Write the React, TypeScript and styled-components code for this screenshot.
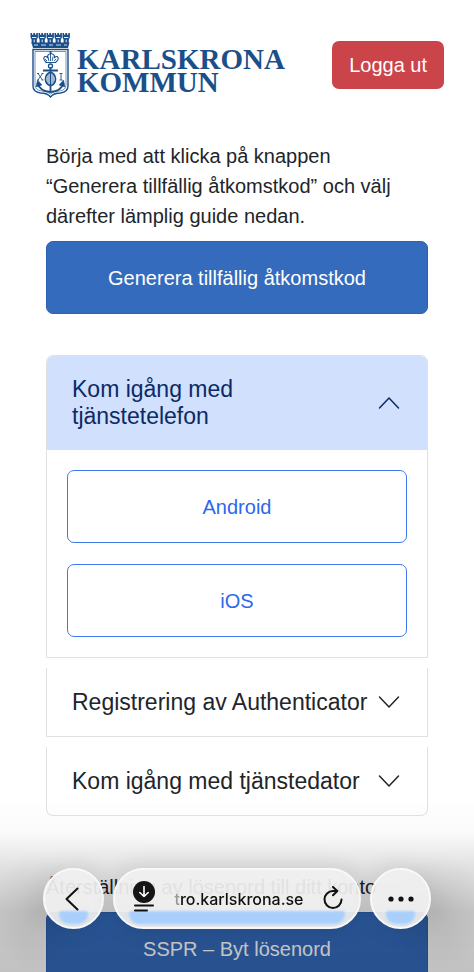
import React, { useState } from "react";
import styled, { createGlobalStyle } from "styled-components";

const GlobalStyle = createGlobalStyle`
  *, *::before, *::after { box-sizing: border-box; }
  body {
    margin: 0;
    background: #fff;
    color: #212529;
    font-family: "Liberation Sans", Arial, sans-serif;
    font-size: 20px;
    line-height: 30px;
  }
  button { font: inherit; cursor: pointer; }
`;

const Screen = styled.div`
  height: 100vh;
  overflow-y: auto;
  scrollbar-width: none;
`;

const Header = styled.header`
  display: flex;
  align-items: center;
  justify-content: space-between;
  padding: 32px 30px 0;
`;

const LogoLink = styled.a`
  display: flex;
  align-items: center;
  gap: 6px;
  color: #1b4f8a;
  text-decoration: none;
`;

const Wordmark = styled.span`
  padding-top: 12px;
  font-family: "Liberation Serif", "Times New Roman", serif;
  font-size: 29px;
  font-weight: 700;
  line-height: 23px;
`;

const LogoutButton = styled.button`
  height: 48px;
  padding: 0 17px;
  border: 0;
  border-radius: 7px;
  background: #cb444a;
  color: #fff;
`;

const Content = styled.main`
  padding: 43px 46px 24px;
`;

const Intro = styled.p`
  margin: 0 0 10px;
  padding-right: 16px;
`;

const WideButton = styled.button<{ $outlined?: boolean }>`
  display: block;
  width: 100%;
  height: 73px;
  border: 1px solid ${(p) => (p.$outlined ? "#3f79ee" : "#2d62b3")};
  border-radius: 7px;
  background: ${(p) => (p.$outlined ? "#fff" : "#346bbc")};
  color: ${(p) => (p.$outlined ? "#2c68ee" : "#fff")};
`;

const Accordion = styled.div`
  display: grid;
  gap: 10px;
  margin: 41px 0 56px;
`;

const AccordionItem = styled.section`
  border: 1px solid #dee2e6;
  border-top: 0;
  overflow: hidden;

  &:first-child { border-top: 1px solid #dee2e6; border-radius: 7px 7px 0 0; }
  &:last-child { border-radius: 0 0 7px 7px; }
`;

const AccordionTitle = styled.h2`
  margin: 0;
  font: inherit;
`;

const AccordionButton = styled.button<{ $open: boolean }>`
  display: flex;
  align-items: center;
  justify-content: space-between;
  width: 100%;
  min-height: 68px;
  padding: 20px 27px 20px 25px;
  border: 0;
  background: ${(p) => (p.$open ? "#d1e0fc" : "transparent")};
  color: ${(p) => (p.$open ? "#0b2a66" : "#212529")};
  font-size: 23px;
  line-height: 27px;
  text-align: left;

  svg { flex: none; }
`;

const TitleText = styled.span<{ $narrow: boolean }>`
  max-width: ${(p) => (p.$narrow ? "240px" : "none")};
  white-space: ${(p) => (p.$narrow ? "normal" : "nowrap")};
`;

const Panel = styled.div`
  display: grid;
  gap: 21px;
  padding: 20px;
`;

const ResetText = styled.p`
  margin: 0 0 10px;
  white-space: nowrap;
`;

const Shade = styled.div`
  position: fixed;
  inset: auto 0 0;
  height: 172px;
  pointer-events: none;
  background:
    radial-gradient(ellipse 46px 60px at 36px 112px, rgba(0, 0, 0, 0.08), transparent),
    radial-gradient(ellipse 46px 60px at calc(100% - 36px) 112px, rgba(0, 0, 0, 0.08), transparent),
    linear-gradient(
      rgba(0, 0, 0, 0) 0,
      rgba(0, 0, 0, 0.02) 34px,
      rgba(0, 0, 0, 0.12) 68px,
      rgba(0, 0, 0, 0.22) 112px,
      rgba(0, 0, 0, 0.24) 172px
    );
`;

const BrowserBar = styled.nav`
  position: fixed;
  inset: auto 43px 43px;
  display: flex;
  gap: 9px;
`;

const Glass = styled.div`
  position: relative;
  isolation: isolate;
  display: flex;
  align-items: center;
  justify-content: center;
  height: 61px;
  border: 2px solid #f8f8f8;
  border-radius: 31px;
  background: rgba(240, 240, 240, 0.93);
  box-shadow: 0 0 24px rgba(0, 0, 0, 0.1);
  color: #111;
  overflow: hidden;

  &::after {
    content: "";
    position: absolute;
    z-index: -1;
    inset: auto 14px 3px;
    height: 13px;
    border-radius: 4px 4px 14px 14px;
    background: #a9d0fd;
    filter: blur(1px);
  }
`;

const RoundGlass = styled(Glass).attrs({ as: "button" })`
  flex: none;
  width: 61px;
  padding: 0;
`;

const AddressGlass = styled(Glass)`
  flex: 1;
  justify-content: space-between;
  padding: 0 16px 0 18px;
`;

const IconButton = styled.button`
  display: flex;
  padding: 0;
  border: 0;
  background: none;
  color: inherit;
`;

const Address = styled.span`
  font-family: Inter, sans-serif;
  font-size: 16px;
  font-weight: 500;
  line-height: 24px;
`;

const Faded = styled.span`
  color: #999;
`;

const turrets = [0, 8, 16, 24, 32];

function Crest() {
  return (
    <svg width="41" height="66" viewBox="0 0 41 66" fill="none" stroke="currentColor" aria-hidden="true">
      {turrets.map((x) => (
        <g key={x} transform={`translate(${x + 0.500} 1)`}>
          <path d="M0 0h1.600v1.800h1.200V0h1.800v1.800h1.200V0h1.600v4.500L6.300 6.500V11H1.100V6.500L0 4.500Z" fill="currentColor" stroke="none" />
          <path d="M1.500 4.500h4.400M3.700 6.500v3" stroke="#fff" strokeWidth=".9" />
        </g>
      ))}
      <path d="M1.500 10.500h38L38 16H3Z" fill="currentColor" stroke="none" />
      <path d="M4 13h4m3 0h5m3 0h4m3 0h5m3 0h3" stroke="#fff" strokeWidth=".8" />
      <path d="M3 17.500h35V54q0 6-7.500 7-7 0-10 4-3-4-10-4Q3 60 3 54Z" strokeWidth="1.400" />
      <path d="M5 19.500h31V53q0 5-6.500 6-6 0-9 3-3-3-9-3Q5 58 5 53Z" strokeWidth=".6" />
      <path d="M16 30.500q-3.500-3-2.500-5t3.500 0q-.5-3 3.500-4 4 1 3.500 4 2.500-2 3.500 0t-2.500 5Z" transform="translate(.5 0)" strokeWidth="1.100" />
      <path d="M15.500 30.500h10M18 24.500l.8 4.500m4.200-4.500-.8 4.500M20.500 19v10M19 20h3M15 27l2 2m9-2-2 2" strokeWidth=".9" />
      <circle cx="20.500" cy="34" r="2" strokeWidth="1.300" />
      <path d="M20.500 36v24M13 38.500h15" strokeWidth="1.800" />
      <ellipse cx="20.500" cy="47" rx="5" ry="6.500" strokeWidth="1.700" />
      <path d="M18 42v10m5-10v10" strokeWidth=".8" />
      <path d="M7.500 51q2 8 13 9 11-1 13-9" strokeWidth="1.800" />
      <path d="m6 55 1.500-7 4.500 5Zm29 0-1.500-7-4.500 5Z" fill="currentColor" strokeWidth=".5" />
      <path d="m8 41.500 4.500 6.500m0-6.500L8 48M7 41.500h2m2.500 0h2M7 48h2m2.500 0h2M31 41.500V48m-1.500-6.500h3m-3 6.500h3" strokeWidth=".9" />
    </svg>
  );
}

function Chevron({ up }: { up: boolean }) {
  return (
    <svg width="22" height="22" viewBox="0 0 22 22" fill="none" stroke="currentColor" strokeWidth="1.500" strokeLinecap="round" strokeLinejoin="round" aria-hidden="true">
      <path d={up ? "m1.500 16 9.500-10 9.500 10" : "m1.500 6 9.500 10L20.500 6"} />
    </svg>
  );
}

function DownloadIcon() {
  return (
    <svg width="22" height="36" viewBox="0 0 22 36" fill="none" aria-hidden="true">
      <circle cx="11" cy="11" r="11" fill="#151515" />
      <path d="M11 5.500v10M6.800 11.500l4.200 4 4.200-4" stroke="#fff" strokeWidth="1.600" strokeLinecap="round" strokeLinejoin="round" />
      <path d="M2 24.500h18M2 29.500h12" stroke="#111" strokeWidth="2" strokeLinecap="round" />
    </svg>
  );
}

function ReloadIcon() {
  return (
    <svg width="20" height="26" viewBox="0 0 20 26" fill="none" stroke="#111" strokeWidth="2" strokeLinecap="round" strokeLinejoin="round" aria-hidden="true">
      <path d="M18.500 13.500A8.500 8.500 0 1 1 10 5h4" />
      <path d="m10 1 4.300 4-4.300 4.300" />
    </svg>
  );
}

const sections = [
  { title: "Kom igång med tjänstetelefon", guides: ["Android", "iOS"] },
  { title: "Registrering av Authenticator", guides: [] },
  { title: "Kom igång med tjänstedator", guides: [] },
];

export default function App() {
  const [openIndex, setOpenIndex] = useState(0);

  return (
    <>
      <GlobalStyle />
      <Screen>
        <Header>
          <LogoLink href="#">
            <Crest />
            <Wordmark>
              KARLSKRONA
              <br />
              KOMMUN
            </Wordmark>
          </LogoLink>
          <LogoutButton>Logga ut</LogoutButton>
        </Header>
        <Content>
          <Intro>
            Börja med att klicka på knappen “Generera tillfällig åtkomstkod” och välj därefter lämplig guide nedan.
          </Intro>
          <WideButton>Generera tillfällig åtkomstkod</WideButton>
          <Accordion>
            {sections.map((section, index) => {
              const open = index === openIndex;
              return (
                <AccordionItem key={section.title}>
                  <AccordionTitle>
                    <AccordionButton $open={open} aria-expanded={open} onClick={() => setOpenIndex(open ? -1 : index)}>
                      <TitleText $narrow={index === 0}>{section.title}</TitleText>
                      <Chevron up={open} />
                    </AccordionButton>
                  </AccordionTitle>
                  {open && section.guides.length > 0 && (
                    <Panel>
                      {section.guides.map((guide) => (
                        <WideButton key={guide} $outlined>
                          {guide}
                        </WideButton>
                      ))}
                    </Panel>
                  )}
                </AccordionItem>
              );
            })}
          </Accordion>
          <ResetText>Återställning av lösenord till ditt konto</ResetText>
          <WideButton>SSPR – Byt lösenord</WideButton>
        </Content>
      </Screen>
      <Shade />
      <BrowserBar aria-label="Webbläsare">
        <RoundGlass aria-label="Tillbaka">
          <svg width="18" height="24" viewBox="0 0 18 24" fill="none" stroke="#111" strokeWidth="2" strokeLinecap="round" strokeLinejoin="round" aria-hidden="true">
            <path d="M12.500 1.500 1.500 12l11 10.500" />
          </svg>
        </RoundGlass>
        <AddressGlass>
          <IconButton aria-label="Hämtade filer">
            <DownloadIcon />
          </IconButton>
          <Address>
            <Faded>t</Faded>ro.karlskrona.se
          </Address>
          <IconButton aria-label="Läs in igen">
            <ReloadIcon />
          </IconButton>
        </AddressGlass>
        <RoundGlass aria-label="Mer">
          <svg width="26" height="6" viewBox="0 0 26 6" fill="#111" aria-hidden="true">
            <circle cx="3" cy="3" r="2.600" />
            <circle cx="13" cy="3" r="2.600" />
            <circle cx="23" cy="3" r="2.600" />
          </svg>
        </RoundGlass>
      </BrowserBar>
    </>
  );
}
